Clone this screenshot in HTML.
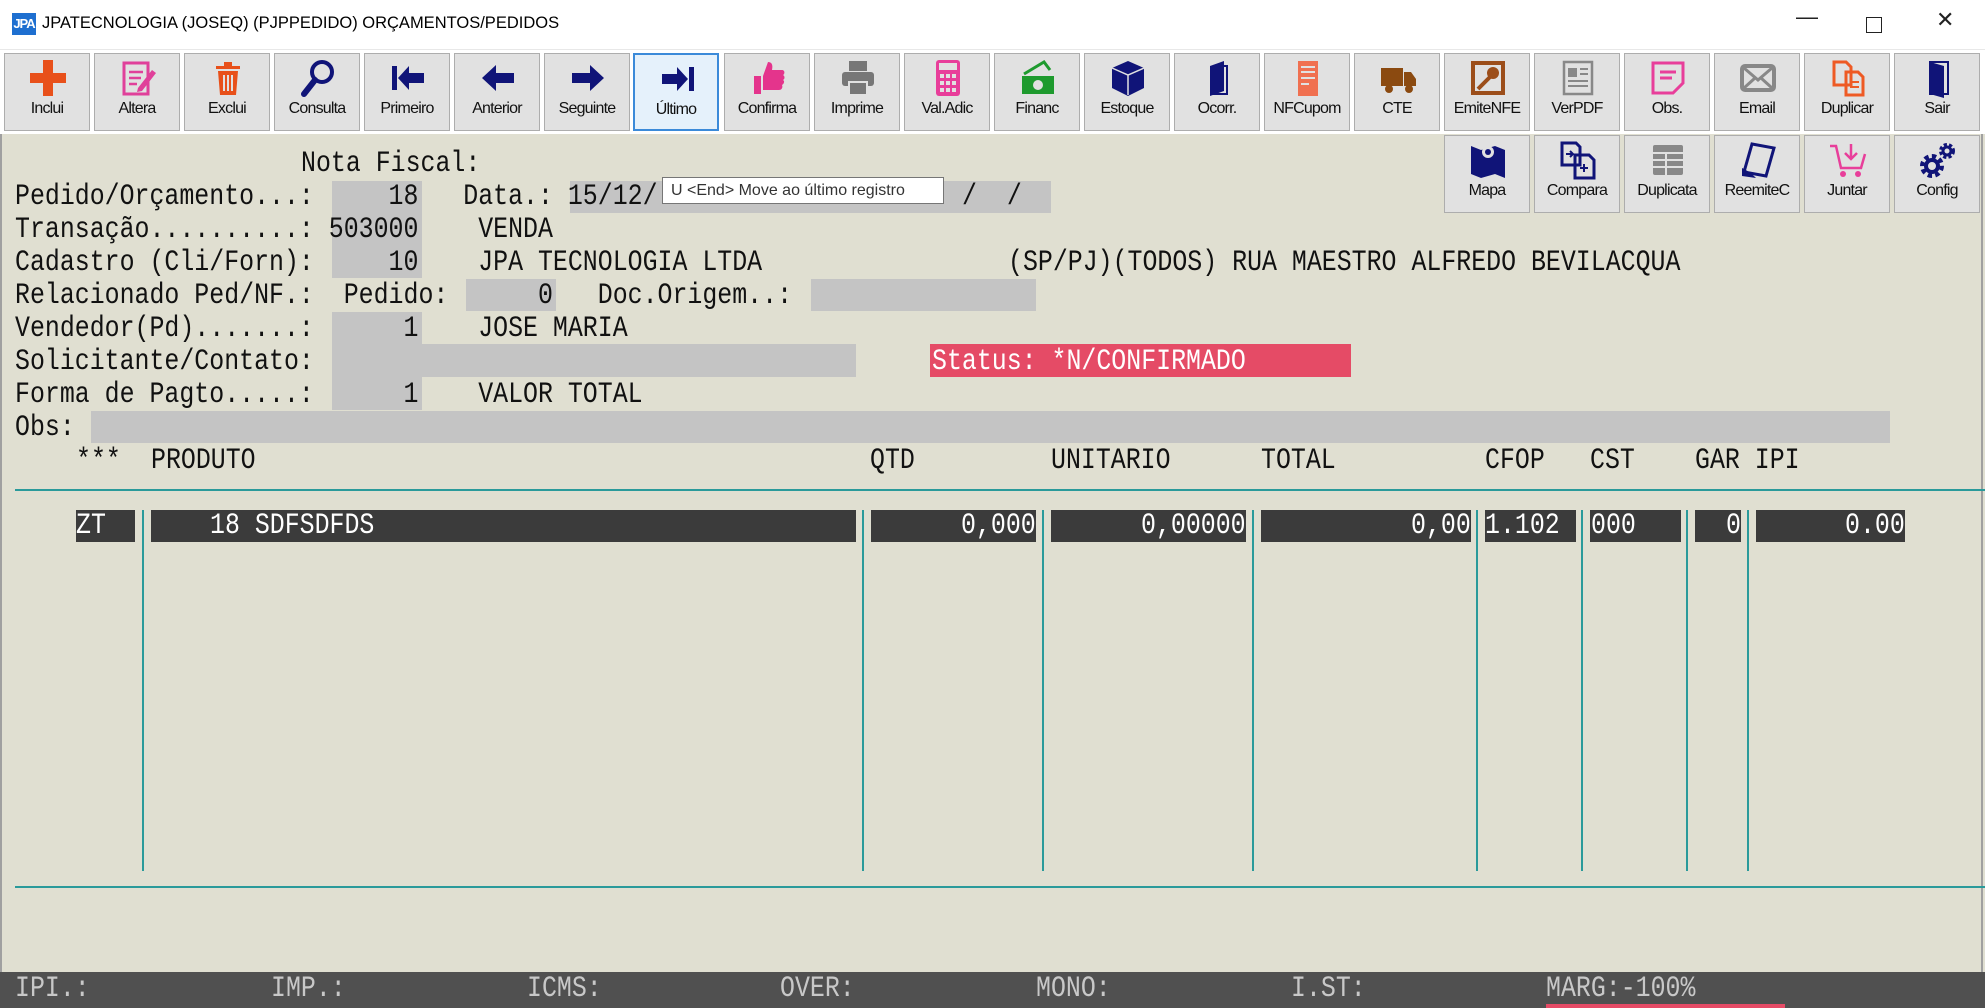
<!DOCTYPE html>
<html><head><meta charset="utf-8">
<style>
*{margin:0;padding:0;box-sizing:border-box}
body{width:1985px;height:1008px;overflow:hidden;background:#e0dfd1;position:relative;font-family:"Liberation Sans",sans-serif}
.title{position:absolute;left:0;top:0;width:1985px;height:50px;background:#fff;border-bottom:1px solid #e8e8e8}
.title .ic{position:absolute;left:12px;top:13px;width:24px;height:22px;background:#1e6fd0;color:#fff;font:bold 13px "Liberation Sans";line-height:22px;text-align:center;letter-spacing:-1px}
.title .tx{position:absolute;left:42px;top:14px;font-size:16.5px;color:#000}
.wc{position:absolute;top:8px;font-size:22px;color:#222}
.tb{position:absolute;left:0;top:50px;width:1985px;height:84px;background:#fff}
.b{position:absolute;width:86px;height:78px;background:#e1e1e1;border:1px solid #adadad;text-align:center}
.b.sel{background:#e5f1fb;border:2px solid #3b8ad9}
.b svg{position:absolute;left:23px;top:4px;width:40px;height:40px}
.b span{position:absolute;left:0;right:0;top:46px;font-size:16px;color:#111;letter-spacing:-0.8px}
.t{position:absolute;font:30px "Liberation Mono",monospace;transform:scaleX(.83);transform-origin:0 0;white-space:pre;color:#111;line-height:33px;height:33px}
.g{position:absolute;background:#c4c4c4}
.d{position:absolute;background:#3b3b3b;top:510px;height:32px}
.w{color:#fff}
.vl{position:absolute;top:510px;height:361px;width:2px;background:#2a9a9a}
.hl{position:absolute;left:15px;width:1970px;height:2px;background:#2a9a9a}
.bot{position:absolute;left:0;top:972px;width:1985px;height:36px;background:#505050}
.bt{position:absolute;top:0;font:30px "Liberation Mono",monospace;transform:scaleX(.83);transform-origin:0 0;color:#c8c8c8;white-space:pre;line-height:34px}
</style></head><body>
<div class="title"><div class="ic">JPA</div><div class="tx">JPATECNOLOGIA (JOSEQ) (PJPPEDIDO) ORÇAMENTOS/PEDIDOS</div>
<div class="wc" style="left:1796px;top:4px">—</div>
<div class="wc" style="left:1866px;width:16px;height:16px;border:1.5px solid #222;top:17px"></div>
<div class="wc" style="left:1936px;top:7px">✕</div></div>
<div style="position:absolute;left:1981px;top:50px;width:2px;height:922px;background:#a0a0a0"></div>
<div style="position:absolute;left:0;top:50px;width:2px;height:922px;background:#a0a0a0"></div>
<div class="tb"></div>

<div class="b" style="left:4px;top:53px"><svg viewBox="0 0 40 40"><path d="M15 2h10v13h13v10H25v13H15V25H2V15h13z" fill="#e8501a"/></svg><span>Inclui</span></div>
<div class="b" style="left:94px;top:53px"><svg viewBox="0 0 40 40"><rect x="6" y="5" width="24" height="31" fill="none" stroke="#e0409a" stroke-width="3"/><path d="M11 14h14M11 20h12M11 26h8" stroke="#e0409a" stroke-width="2.5"/><path d="M20 30l14-18 4 3-14 18-5 1z" fill="#e0409a"/></svg><span>Altera</span></div>
<div class="b" style="left:184px;top:53px"><svg viewBox="0 0 40 40"><path d="M8 8h24v3H8zM16 4h8v4h-8zM10 13h20l-2 24H12z" fill="#e8501a"/><path d="M16 17v16M20 17v16M24 17v16" stroke="#e1e1e1" stroke-width="2"/></svg><span>Exclui</span></div>
<div class="b" style="left:274px;top:53px"><svg viewBox="0 0 40 40"><circle cx="24" cy="14" r="10" fill="none" stroke="#101478" stroke-width="4"/><path d="M17 22L6 36" stroke="#101478" stroke-width="6" stroke-linecap="round"/></svg><span>Consulta</span></div>
<div class="b" style="left:364px;top:53px"><svg viewBox="0 0 40 40"><path d="M4 8h5v24H4zM10 20l11-12v7h15v10H21v7z" fill="#101478"/></svg><span>Primeiro</span></div>
<div class="b" style="left:454px;top:53px"><svg viewBox="0 0 40 40"><path d="M4 20l14-13v8h18v10H18v8z" fill="#101478"/></svg><span>Anterior</span></div>
<div class="b" style="left:544px;top:53px"><svg viewBox="0 0 40 40"><path d="M36 20L22 7v8H4v10h18v8z" fill="#101478"/></svg><span>Seguinte</span></div>
<div class="b sel" style="left:633px;top:53px"><svg viewBox="0 0 40 40"><path d="M31 8h5v24h-5zM30 20L19 8v7H4v10h15v7z" fill="#101478"/></svg><span>Último</span></div>
<div class="b" style="left:724px;top:53px"><svg viewBox="0 0 40 40"><path d="M6 18h7v18H6zM15 18l5-14c4 0 5 3 4 8h10c3 0 3 4 1 5 2 1 2 4 0 5 2 1 1 4-1 5 1 2 0 5-3 5H15z" fill="#e4348c"/></svg><span>Confirma</span></div>
<div class="b" style="left:814px;top:53px"><svg viewBox="0 0 40 40"><rect x="11" y="3" width="18" height="10" fill="#777"/><rect x="4" y="14" width="32" height="14" rx="3" fill="#777"/><rect x="11" y="24" width="18" height="13" fill="#777" stroke="#e1e1e1" stroke-width="2"/></svg><span>Imprime</span></div>
<div class="b" style="left:904px;top:53px"><svg viewBox="0 0 40 40"><rect x="8" y="2" width="24" height="36" rx="3" fill="#e83e9a"/><rect x="11" y="5" width="18" height="7" fill="#e1e1e1"/><path d="M12 16h4v4h-4zM18 16h4v4h-4zM24 16h4v4h-4zM12 23h4v4h-4zM18 23h4v4h-4zM24 23h4v4h-4zM12 30h4v4h-4zM18 30h4v4h-4zM24 30h4v4h-4z" fill="#e1e1e1"/></svg><span>Val.Adic</span></div>
<div class="b" style="left:994px;top:53px"><svg viewBox="0 0 40 40"><path d="M6 16l20-12 6 8" fill="none" stroke="#1e9a2e" stroke-width="3"/><rect x="4" y="18" width="32" height="18" fill="#1e9a2e"/><circle cx="20" cy="27" r="5" fill="#e1e1e1"/></svg><span>Financ</span></div>
<div class="b" style="left:1084px;top:53px"><svg viewBox="0 0 40 40"><path d="M20 3l16 7v20l-16 8-16-8V10z" fill="#101478"/><path d="M20 17v20M4 10l16 7 16-7" stroke="#e1e1e1" stroke-width="1.5" fill="none"/></svg><span>Estoque</span></div>
<div class="b" style="left:1174px;top:53px"><svg viewBox="0 0 40 40"><path d="M12 8l14-5v30l-14 5z" fill="#101478"/><path d="M26 8h3v28H14" fill="none" stroke="#101478" stroke-width="2"/></svg><span>Ocorr.</span></div>
<div class="b" style="left:1264px;top:53px"><svg viewBox="0 0 40 40"><rect x="10" y="3" width="20" height="35" fill="#f07050"/><path d="M13 9h14M13 14h14M13 20h14M13 26h8" stroke="#e1e1e1" stroke-width="2"/></svg><span>NFCupom</span></div>
<div class="b" style="left:1354px;top:53px"><svg viewBox="0 0 40 40"><rect x="3" y="10" width="22" height="18" fill="#8b4a10"/><path d="M26 14h7l5 7v7H26z" fill="#8b4a10"/><circle cx="11" cy="31" r="4" fill="#8b4a10"/><circle cx="31" cy="31" r="4" fill="#8b4a10"/></svg><span>CTE</span></div>
<div class="b" style="left:1444px;top:53px"><svg viewBox="0 0 40 40"><rect x="3" y="3" width="34" height="34" fill="#9c4e1a"/><rect x="7" y="7" width="26" height="26" fill="#e1e1e1"/><circle cx="25" cy="15" r="6" fill="#9c4e1a"/><path d="M22 19L10 31" stroke="#9c4e1a" stroke-width="4"/></svg><span>EmiteNFE</span></div>
<div class="b" style="left:1534px;top:53px"><svg viewBox="0 0 40 40"><rect x="6" y="4" width="28" height="32" fill="none" stroke="#888" stroke-width="2.5"/><rect x="10" y="10" width="9" height="9" fill="#888"/><path d="M22 11h8M22 16h8M10 23h20M10 28h20" stroke="#888" stroke-width="2"/></svg><span>VerPDF</span></div>
<div class="b" style="left:1624px;top:53px"><svg viewBox="0 0 40 40"><path d="M5 5h30v20l-10 10H5z" fill="none" stroke="#e83e9a" stroke-width="3"/><path d="M12 14h16M12 20h12" stroke="#e83e9a" stroke-width="3"/></svg><span>Obs.</span></div>
<div class="b" style="left:1714px;top:53px"><svg viewBox="0 0 40 40"><rect x="4" y="8" width="32" height="24" rx="3" fill="none" stroke="#888" stroke-width="4"/><path d="M6 10l14 12 14-12M6 30l11-10M34 30l-11-10" stroke="#888" stroke-width="3" fill="none"/></svg><span>Email</span></div>
<div class="b" style="left:1804px;top:53px"><svg viewBox="0 0 40 40"><path d="M6 4h12l5 5v18H6z M18 14h12l5 5v18H18z" fill="none" stroke="#ee5a24" stroke-width="3"/><path d="M22 24h9M22 29h9" stroke="#ee5a24" stroke-width="2"/></svg><span>Duplicar</span></div>
<div class="b" style="left:1894px;top:53px"><svg viewBox="0 0 40 40"><path d="M12 4h18v32H12z" fill="none" stroke="#101478" stroke-width="2"/><path d="M12 4l14 4v32l-14-4z" fill="#101478"/></svg><span>Sair</span></div>

<div class="b" style="left:1444px;top:135px"><svg viewBox="0 0 40 40"><path d="M3 6l10 4 14-4 10 4v28l-10-4-14 4-10-4z" fill="#101478"/><circle cx="20" cy="12" r="6" fill="#e1e1e1"/><circle cx="20" cy="12" r="3" fill="#101478"/></svg><span>Mapa</span></div>
<div class="b" style="left:1534px;top:135px"><svg viewBox="0 0 40 40"><path d="M4 3h14l4 4v18H4zM17 15h14l5 5v18H17z" fill="#e1e1e1" stroke="#101478" stroke-width="3"/><path d="M8 14h7M12 11l3 3-3 3M22 28h8M26 24v8" stroke="#101478" stroke-width="2" fill="none"/></svg><span>Compara</span></div>
<div class="b" style="left:1624px;top:135px"><svg viewBox="0 0 40 40"><rect x="5" y="5" width="30" height="30" rx="2" fill="#888"/><path d="M5 13h30M5 20h30M5 27h30M18 13v22" stroke="#e1e1e1" stroke-width="2"/></svg><span>Duplicata</span></div>
<div class="b" style="left:1714px;top:135px"><svg viewBox="0 0 40 40"><path d="M14 4l22 4-8 28L6 32z" fill="none" stroke="#101478" stroke-width="3"/><path d="M4 28c4 2 8 4 14 10l-14-2z" fill="#101478"/></svg><span>ReemiteC</span></div>
<div class="b" style="left:1804px;top:135px"><svg viewBox="0 0 40 40"><path d="M2 6h6l5 22h20l4-14" fill="none" stroke="#e83e9a" stroke-width="2.5"/><path d="M23 4v14M17 13l6 6 6-6" stroke="#e83e9a" stroke-width="2.5" fill="none"/><circle cx="15" cy="34" r="3" fill="#e83e9a"/><circle cx="30" cy="34" r="3" fill="#e83e9a"/></svg><span>Juntar</span></div>
<div class="b" style="left:1894px;top:135px"><svg viewBox="0 0 40 40"><circle cx="14" cy="26" r="9" fill="none" stroke="#101478" stroke-width="6" stroke-dasharray="4 3"/><circle cx="14" cy="26" r="6" fill="none" stroke="#101478" stroke-width="4"/><circle cx="29" cy="11" r="6" fill="none" stroke="#101478" stroke-width="4" stroke-dasharray="3 2"/><circle cx="29" cy="11" r="4" fill="none" stroke="#101478" stroke-width="3"/></svg><span>Config</span></div>

<div class="g" style="left:332px;top:181px;width:90px;height:97px"></div>
<div class="g" style="left:570px;top:181px;width:481px;height:32px"></div>
<div class="g" style="left:466px;top:279px;width:90px;height:32px"></div>
<div class="g" style="left:811px;top:279px;width:225px;height:32px"></div>
<div class="g" style="left:332px;top:312px;width:90px;height:98px"></div>
<div class="g" style="left:422px;top:344px;width:434px;height:33px"></div>
<div class="g" style="left:91px;top:411px;width:1799px;height:32px"></div>
<div style="position:absolute;left:930px;top:344px;width:421px;height:33px;background:#e54b66"></div>

<div class="t" style="left:301px;top:148px">Nota Fiscal:</div>
<div class="t" style="left:15px;top:181px">Pedido/Orçamento...:     18   Data.: 15/12/</div>
<div class="t" style="left:962px;top:181px">/  /</div>
<div class="t" style="left:15px;top:214px">Transação..........: 503000    VENDA</div>
<div class="t" style="left:15px;top:247px">Cadastro (Cli/Forn):     10    JPA TECNOLOGIA LTDA</div>
<div class="t" style="left:1008px;top:247px">(SP/PJ)(TODOS) RUA MAESTRO ALFREDO BEVILACQUA</div>
<div class="t" style="left:15px;top:280px">Relacionado Ped/NF.:  Pedido:      0   Doc.Origem..:</div>
<div class="t" style="left:15px;top:313px">Vendedor(Pd).......:      1    JOSE MARIA</div>
<div class="t" style="left:15px;top:346px">Solicitante/Contato:</div>
<div class="t w" style="left:932px;top:346px">Status: *N/CONFIRMADO</div>
<div class="t" style="left:15px;top:379px">Forma de Pagto.....:      1    VALOR TOTAL</div>
<div class="t" style="left:15px;top:412px">Obs:</div>
<div class="t" style="left:76px;top:445px">***</div>
<div class="t" style="left:151px;top:445px">PRODUTO</div>
<div class="t" style="left:870px;top:445px">QTD</div>
<div class="t" style="left:1051px;top:445px">UNITARIO</div>
<div class="t" style="left:1261px;top:445px">TOTAL</div>
<div class="t" style="left:1485px;top:445px">CFOP</div>
<div class="t" style="left:1590px;top:445px">CST</div>
<div class="t" style="left:1695px;top:445px">GAR IPI</div>

<div style="position:absolute;left:662px;top:177px;width:282px;height:27px;background:#fff;border:1px solid #767676;font-size:16px;line-height:25px;padding-left:8px;color:#333;white-space:nowrap">U &lt;End&gt; Move ao último registro</div>

<div class="hl" style="top:489px"></div>
<div class="hl" style="top:886px"></div>
<div class="vl" style="left:142px"></div><div class="vl" style="left:862px"></div><div class="vl" style="left:1042px"></div><div class="vl" style="left:1252px"></div><div class="vl" style="left:1476px"></div><div class="vl" style="left:1581px"></div><div class="vl" style="left:1686px"></div><div class="vl" style="left:1747px"></div>

<div class="d" style="left:76px;width:59px"></div>
<div class="d" style="left:151px;width:705px"></div>
<div class="d" style="left:871px;width:165px"></div>
<div class="d" style="left:1051px;width:195px"></div>
<div class="d" style="left:1261px;width:210px"></div>
<div class="d" style="left:1485px;width:91px"></div>
<div class="d" style="left:1590px;width:91px"></div>
<div class="d" style="left:1695px;width:46px"></div>
<div class="d" style="left:1756px;width:149px"></div>
<div class="t w" style="left:76px;top:510px">ZT</div>
<div class="t w" style="left:210px;top:510px">18 SDFSDFDS</div>
<div class="t w" style="left:961px;top:510px">0,000</div>
<div class="t w" style="left:1141px;top:510px">0,00000</div>
<div class="t w" style="left:1411px;top:510px">0,00</div>
<div class="t w" style="left:1485px;top:510px">1.102</div>
<div class="t w" style="left:1591px;top:510px">000</div>
<div class="t w" style="left:1726px;top:510px">0</div>
<div class="t w" style="left:1845px;top:510px">0.00</div>

<div class="bot">
<div class="bt" style="left:15px">IPI.:</div>
<div class="bt" style="left:271px">IMP.:</div>
<div class="bt" style="left:527px">ICMS:</div>
<div class="bt" style="left:780px">OVER:</div>
<div class="bt" style="left:1036px">MONO:</div>
<div class="bt" style="left:1291px">I.ST:</div>
<div class="bt" style="left:1546px">MARG:-100%</div>
<div style="position:absolute;left:1546px;top:32px;width:239px;height:4px;background:#e54b66"></div>
</div>
</body></html>
